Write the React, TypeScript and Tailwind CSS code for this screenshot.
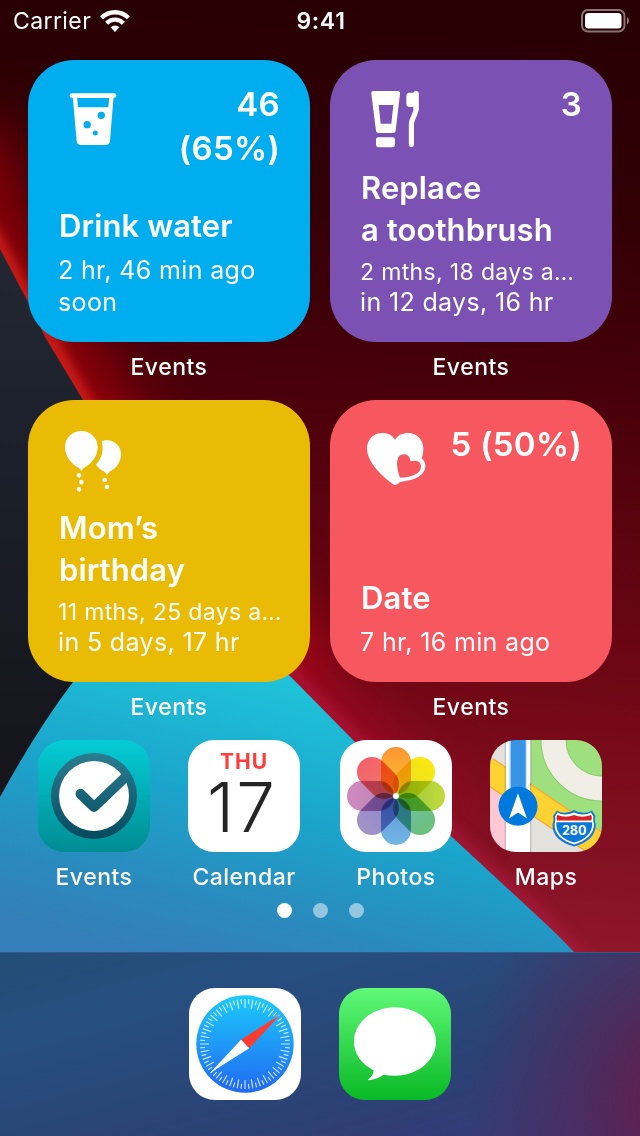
import React from 'react';
import clsx from 'clsx';

interface Widget {
  id: string;
  title: string[];
  count?: string;
  lines: { text: string; compact?: boolean }[];
  color: string;
  icon: React.FC;
}

interface HomeApp {
  name: string;
  icon: React.FC;
}

// Glyphs share one grid: 3 units per pixel, origin at the widget corner
const Glyph: React.FC<{ children: React.ReactNode }> = ({ children }) => (
  <svg viewBox="90 90 216 198" className="w-[72px] h-[66px] shrink-0" fill="white">
    {children}
  </svg>
);

const CupGlyph: React.FC = () => (
  <Glyph>
    <rect x="125" y="99.5" width="140" height="14" rx="7" />
    <path
      fillRule="evenodd"
      d="M134 107H257L246 243Q245 255 233 255H159Q147 255 146 243ZM147.500 114L150 142H241L243.500 114Z"
    />
    <g fill="#00adef">
      <circle cx="220" cy="166" r="11" />
      <circle cx="177.500" cy="194" r="11" />
      <circle cx="202" cy="219" r="7.500" />
    </g>
  </Glyph>
);

const ToothbrushGlyph: React.FC = () => (
  <Glyph>
    <path
      fillRule="evenodd"
      d="M130 93H204Q211 93 210 101L197 212Q196 219 189 219H146Q139 219 138 212L124 101Q123 93 130 93ZM146 135L152 191H184L190 135Z"
    />
    <rect x="138" y="232" width="57" height="29.500" rx="7" />
    <path d="M236 98H250Q251 93 258 93Q266 93 266.500 100V148Q266 154 263 161L254 183Q252 188 252 194V254Q251 261 244 261.500Q237 261 236.500 254V190Q237 183 240 176L250 152V141H238Q229 140 229 132V107Q229 99 236 98Z" />
  </Glyph>
);

const BalloonsGlyph: React.FC = () => (
  <Glyph>
    <path d="M160 93C188 93 209 114 209 142C209 168 190 194 168 203L160 213L152 203C130 194 111 168 111 142C111 114 132 93 160 93Z" />
    <path d="M221 123C226 121 232 120.500 238 120.500C262 121 279 139 279 163C279 187 263 208 244 215L237 225L230 215C220 211 211 203 204 194C223 174 228 148 221 123Z" />
    <circle cx="153" cy="226" r="7" />
    <circle cx="160" cy="246.500" r="7" />
    <circle cx="153" cy="268" r="7" />
    <circle cx="230" cy="240" r="7" />
    <circle cx="237" cy="261" r="7" />
  </Glyph>
);

const HeartsGlyph: React.FC = () => (
  <Glyph>
    <path d="M195 119C204 105 218 99 234 99C262 99 280 120 280 146C280 158 278 166 275 175C283 181 287 190 286 202C283 225 260 241 210 246Q203 254 196 255Q191 255 184 249C140 215 111 178 111 146C111 120 129 99 157 99C173 99 187 105 195 119Z" />
    <path
      fill="#f75860"
      d="M210 233C201 205 198 187 205 172C211 161 227 160 235 168Q241 174 242 184Q252 180 263 184C273 188 275 199 271 209C264 223 242 231 210 233Z"
    />
  </Glyph>
);

const Label: React.FC<{ children: React.ReactNode }> = ({ children }) => (
  <span className="mt-[9px] text-[23px] leading-8 font-medium tracking-[0.5px]">{children}</span>
);

const WidgetCard: React.FC<{ widget: Widget }> = ({ widget }) => {
  const Icon = widget.icon;
  return (
    <div className="flex flex-col items-center w-[282px] h-[340px]">
      <div
        className={clsx(
          'flex flex-col justify-between w-full h-[282px] rounded-[46px] px-[30px] pt-[30px] pb-6',
          widget.color,
        )}
      >
        <div className="flex items-start justify-between h-[66px]">
          <Icon />
          <p className="max-w-[140px] -mt-2 text-right text-[33px] leading-[44px] font-semibold tracking-[0.3px]">
            {widget.count}
          </p>
        </div>
        <div>
          <h2 className="mb-[7px] pl-px text-[31px] leading-[42px] font-semibold tracking-[0.1px]">
            {widget.title.map((line) => (
              <span key={line} className="block">
                {line}
              </span>
            ))}
          </h2>
          {widget.lines.map((line) => (
            <p
              key={line.text}
              className={clsx(
                'whitespace-nowrap',
                line.compact
                  ? 'text-[23px] leading-7 tracking-[0.35px]'
                  : 'text-[25px] leading-8 tracking-[0.35px]',
              )}
            >
              {line.text}
            </p>
          ))}
        </div>
      </div>
      <Label>Events</Label>
    </div>
  );
};

const EventsIcon: React.FC = () => (
  <svg viewBox="0 0 112 112" className="size-full">
    <defs>
      <linearGradient id="events-bg" x2="0" y2="1">
        <stop stopColor="#05ccd6" />
        <stop offset="1" stopColor="#008c93" />
      </linearGradient>
      <linearGradient id="events-ring" gradientUnits="userSpaceOnUse" x1="0" y1="13" x2="0" y2="99">
        <stop stopColor="#2c7d90" />
        <stop offset="1" stopColor="#054a5f" />
      </linearGradient>
    </defs>
    <rect width="112" height="112" fill="url(#events-bg)" />
    <circle cx="56" cy="56" r="43" fill="url(#events-ring)" />
    <circle cx="56" cy="56" r="35" fill="white" />
    <path
      d="M42.500 53.800L56 67L88 36.500"
      fill="none"
      stroke="url(#events-ring)"
      strokeWidth="10"
      strokeLinecap="round"
      strokeLinejoin="round"
    />
  </svg>
);

const CalendarIcon: React.FC = () => (
  <div className="flex flex-col items-center size-full bg-white">
    <span className="mt-[10px] text-[21px] leading-6 font-bold tracking-[1px] text-[#ff3b3b]">THU</span>
    <span className="-mt-px -ml-1 text-[69px] leading-[68px] font-light tracking-[2px] text-[#252525]">17</span>
  </div>
);

const petals = [
  { angle: 0, from: '#fb9634', to: '#fcc42c' },
  { angle: 45, from: '#fbe80f', to: '#e6dd2d' },
  { angle: 90, from: '#c3da3c', to: '#93c83e' },
  { angle: 135, from: '#6cc07c', to: '#6dbfaa' },
  { angle: 180, from: '#6fb6e6', to: '#6596d2' },
  { angle: 225, from: '#a392c9', to: '#8a88c4' },
  { angle: 270, from: '#cf8abf', to: '#b886b4' },
  { angle: 315, from: '#f4606c', to: '#ea7f66' },
];

const PhotosIcon: React.FC = () => (
  <svg viewBox="0 0 112 112" className="size-full">
    <rect width="112" height="112" fill="white" />
    {petals.map((petal) => (
      <g key={petal.angle} className="mix-blend-multiply">
        <linearGradient id={`petal-${petal.angle}`} x2="0" y2="1">
          <stop stopColor={petal.from} />
          <stop offset="1" stopColor={petal.to} />
        </linearGradient>
        <rect
          x="41"
          y="7"
          width="30"
          height="47"
          rx="15"
          fill={`url(#petal-${petal.angle})`}
          transform={`rotate(${petal.angle} 56 56)`}
        />
      </g>
    ))}
    <circle cx="56" cy="56" r="3" fill="white" />
  </svg>
);

const MapsIcon: React.FC = () => (
  <svg viewBox="0 0 112 112" className="size-full">
    <rect width="112" height="112" fill="#e3e1db" />
    <path d="M41 0H112V94L41 46Z" fill="#9fe07e" />
    <circle cx="112" cy="0" r="48.500" fill="none" stroke="#8acb6d" strokeWidth="26" />
    <circle cx="112" cy="0" r="48.500" fill="none" stroke="#f1eee7" strokeWidth="24" />
    <path d="M0 47L16 59V112H0Z" fill="#ffc9d4" />
    <path d="M-4 29L116 110" stroke="#f9a72b" strokeWidth="26" />
    <path d="M-4 29L116 110" stroke="#ffd233" strokeWidth="23.500" />
    <rect x="14.500" width="27" height="112" fill="#000" fillOpacity=".12" />
    <rect x="16" width="24" height="112" fill="white" />
    <rect x="19.500" width="17" height="66" fill="#9cc9f2" />
    <rect x="21" width="14.500" height="66" fill="#3793e3" />
    <circle cx="28" cy="66.300" r="19.500" fill="#0079de" />
    <path d="M28 53.300L37 78.500L28 72.500L19 78.500Z" fill="white" />
    <path
      d="M67 70.500Q71 73.500 76 72.500Q81 72 84 70Q87 72 92 72.500Q97 73.500 102 70.500L105.500 76Q104 79 105.800 84C106 96 97 103 84.300 106.500C71 103 62 96 62.500 84Q64.500 79 63 76Z"
      fill="#1478d4"
    />
    <path
      d="M67.500 72.500Q71 75 76 74.500Q81 74 84 72.500Q87 74 92 74.500Q97 75 101 72.500L103.500 76.500Q102.500 79 104 84C104 94 96 101 84.300 104.500C72 101 64.300 94 64.500 84Q66 79 65 76.500Z"
      fill="white"
    />
    <path d="M67.500 75Q76 78.500 84 75Q92 78.500 101 75Q102.500 76.500 101.300 80.500H67Q66 76.500 67.500 75Z" fill="#da2128" />
    <path d="M66.300 82.200H102.200C103 93 95 99.500 84.300 102.500C73 99.500 65.500 93 66.300 82.200Z" fill="#0b78d8" />
    <text x="84.200" y="94.500" textAnchor="middle" fontSize="12.500" fontWeight="700" fill="white">
      280
    </text>
  </svg>
);

const SafariIcon: React.FC = () => (
  <svg viewBox="0 0 112 112" className="size-full">
    <linearGradient id="safari-dial" x2="0" y2="1">
      <stop stopColor="#1ccbfb" />
      <stop offset="1" stopColor="#2168f2" />
    </linearGradient>
    <rect width="112" height="112" fill="white" />
    <circle cx="56" cy="56" r="48.700" fill="url(#safari-dial)" />
    {Array.from({ length: 72 }, (_, i) => (
      <line
        key={i}
        x1="56"
        y1="11"
        x2="56"
        y2={i % 2 ? 16 : 20}
        stroke="white"
        strokeOpacity=".75"
        strokeWidth="1.200"
        transform={`rotate(${i * 5} 56 56)`}
      />
    ))}
    <path d="M91.500 26.500L60.200 60.200L52 51.800Z" fill="#ff3b30" />
    <path d="M21 85L52 51.800L60.200 60.200Z" fill="white" />
  </svg>
);

const MessagesIcon: React.FC = () => (
  <svg viewBox="0 0 112 112" className="size-full">
    <linearGradient id="messages-bg" x2="0" y2="1">
      <stop stopColor="#60f978" />
      <stop offset="1" stopColor="#09b925" />
    </linearGradient>
    <rect width="112" height="112" fill="url(#messages-bg)" />
    <path
      d="M56 19.300C78.700 19.300 97 34.700 97 53.600C97 72.500 78.700 87.800 56 87.800Q50 87.800 44.500 86.800Q38 91.500 30 92.300Q28.500 92 30 90.700Q35 86 34.500 82.200C22 76 15 65.500 15 53.600C15 34.700 33.300 19.300 56 19.300Z"
      fill="white"
    />
  </svg>
);

const AppIcon: React.FC<{ icon: React.FC }> = ({ icon: Icon }) => (
  <div className="size-28 rounded-[26px] overflow-hidden">
    <Icon />
  </div>
);

const WifiIcon: React.FC = () => (
  <svg viewBox="0 0 30 22" className="w-[30px] h-[22px]" fill="none" stroke="white">
    <path d="M1.600 7.800A19 19 0 0 1 28.400 7.800" strokeWidth="4.400" />
    <path d="M6.600 13.200A11.600 11.600 0 0 1 23.400 13.200" strokeWidth="4.200" />
    <path d="M15 22L10.500 17.300A6.500 6.500 0 0 1 19.500 17.300Z" fill="white" stroke="none" />
  </svg>
);

const BatteryIcon: React.FC = () => (
  <svg viewBox="0 0 48 24" className="w-12 h-6">
    <rect x="1" y="1" width="42.500" height="21.500" rx="6" fill="none" stroke="white" strokeOpacity=".45" strokeWidth="2" />
    <rect x="4" y="4" width="36.500" height="15.500" rx="3.500" fill="white" />
    <path d="M46 8Q48 9.500 48 11.800Q48 14 46 15.500Z" fill="white" fillOpacity=".5" />
  </svg>
);

const Wallpaper: React.FC = () => (
  <svg viewBox="0 0 640 1136" className="absolute inset-0 w-full h-full">
    <defs>
      <linearGradient id="wall-red" gradientUnits="userSpaceOnUse" x1="400" y1="0" x2="340" y2="950">
        <stop stopColor="#280004" />
        <stop offset=".2" stopColor="#300005" />
        <stop offset=".42" stopColor="#4a000a" />
        <stop offset=".75" stopColor="#760918" />
        <stop offset="1" stopColor="#90172c" />
      </linearGradient>
      <linearGradient id="wall-dark" x2="0" y2="1">
        <stop stopColor="#232733" />
        <stop offset=".5" stopColor="#1a1e27" />
        <stop offset="1" stopColor="#15151a" />
      </linearGradient>
      <linearGradient id="wall-cyan" gradientUnits="userSpaceOnUse" x1="250" y1="670" x2="180" y2="960">
        <stop stopColor="#1fc3d9" />
        <stop offset=".45" stopColor="#1ba4cb" />
        <stop offset=".8" stopColor="#2b89bd" />
        <stop offset="1" stopColor="#347fb9" />
      </linearGradient>
      <filter id="glow-wide" filterUnits="userSpaceOnUse" x="-200" y="-100" width="1040" height="1336" colorInterpolationFilters="sRGB">
        <feGaussianBlur stdDeviation="30" />
      </filter>
      <filter id="glow-tight" filterUnits="userSpaceOnUse" x="-200" y="-100" width="1040" height="1336" colorInterpolationFilters="sRGB">
        <feGaussianBlur stdDeviation="7" />
      </filter>
    </defs>
    <rect width="640" height="1136" fill="url(#wall-red)" />
    <path d="M-30 130L-10 230L110 440L300 680" fill="none" stroke="#a00009" strokeOpacity=".9" strokeWidth="70" filter="url(#glow-wide)" />
    <path d="M-14 225L0 249L28 302L83 400L130 480" fill="none" stroke="#ef2a20" strokeWidth="11" filter="url(#glow-tight)" />
    <path d="M230 600L353 740L440 830" fill="none" stroke="#b50826" strokeOpacity=".7" strokeWidth="50" filter="url(#glow-wide)" />
    <path d="M270 650L353 738L452 835L547 923L590 970" fill="none" stroke="#c02048" strokeOpacity=".7" strokeWidth="10" filter="url(#glow-tight)" />
    <path d="M0 249L28 302L45 337L83 400L180 560L75 682L0 797Z" fill="url(#wall-dark)" />
    <path d="M0 797Q36 731 73 682L160 560L291 677L353 740L452 837L547 925Q560 937 574 952V960H0Z" fill="url(#wall-cyan)" />
  </svg>
);

const widgets: Widget[] = [
  {
    id: 'water',
    title: ['Drink water'],
    count: '46 (65%)',
    lines: [{ text: '2 hr, 46 min ago' }, { text: 'soon' }],
    color: 'bg-[#00adef]',
    icon: CupGlyph,
  },
  {
    id: 'toothbrush',
    title: ['Replace', 'a toothbrush'],
    count: '3',
    lines: [{ text: '2 mths, 18 days a…', compact: true }, { text: 'in 12 days, 16 hr' }],
    color: 'bg-[#7b52b3]',
    icon: ToothbrushGlyph,
  },
  {
    id: 'birthday',
    title: ['Mom’s', 'birthday'],
    lines: [{ text: '11 mths, 25 days a…', compact: true }, { text: 'in 5 days, 17 hr' }],
    color: 'bg-[#e9bb05]',
    icon: BalloonsGlyph,
  },
  {
    id: 'date',
    title: ['Date'],
    count: '5 (50%)',
    lines: [{ text: '7 hr, 16 min ago' }],
    color: 'bg-[#f75860]',
    icon: HeartsGlyph,
  },
];

const apps: HomeApp[] = [
  { name: 'Events', icon: EventsIcon },
  { name: 'Calendar', icon: CalendarIcon },
  { name: 'Photos', icon: PhotosIcon },
  { name: 'Maps', icon: MapsIcon },
];

export default function App() {
  return (
    <div className="relative w-[640px] h-[1136px] overflow-hidden font-['Inter','Liberation_Sans',sans-serif] text-white">
      <Wallpaper />
      <div className="relative flex flex-col h-full">
        {/* Status bar */}
        <header className="grid grid-cols-3 items-center h-10 pl-[13px] pr-[11px]">
          <div className="flex items-center gap-[9px]">
            <span className="mt-px text-[23px] leading-10 tracking-[0.4px]">Carrier</span>
            <WifiIcon />
          </div>
          <span className="mt-px text-center text-[23px] leading-10 font-semibold tracking-[0.7px]">9:41</span>
          <div className="flex justify-end">
            <BatteryIcon />
          </div>
        </header>

        {/* Widgets */}
        <main className="grid grid-cols-2 gap-x-5 w-[584px] mx-auto mt-5">
          {widgets.map((widget) => (
            <WidgetCard key={widget.id} widget={widget} />
          ))}
        </main>

        {/* Apps */}
        <div className="flex gap-[38px] px-[38px] [&>:nth-child(2)]:mr-0.5">
          {apps.map((app) => (
            <div key={app.name} className="flex flex-col items-center w-28">
              <AppIcon icon={app.icon} />
              <Label>{app.name}</Label>
            </div>
          ))}
        </div>

        {/* Page dots */}
        <div className="flex justify-center gap-[21px] mt-[10px]">
          <span className="size-[15px] rounded-full bg-white" />
          <span className="size-[15px] rounded-full bg-white/50" />
          <span className="size-[15px] rounded-full bg-white/50" />
        </div>

        {/* Dock */}
        <footer className="flex justify-center gap-[38px] h-[184px] mt-auto pt-[35px] border-t border-[#35598a] bg-[radial-gradient(ellipse_200px_280px_at_105%_80%,#641b49_0%,#5b225090_45%,transparent_100%),linear-gradient(165deg,#214e76_0%,#264f80_25%,#2b4275_65%,#3a3878_100%)]">
          <AppIcon icon={SafariIcon} />
          <AppIcon icon={MessagesIcon} />
        </footer>
      </div>
    </div>
  );
}
